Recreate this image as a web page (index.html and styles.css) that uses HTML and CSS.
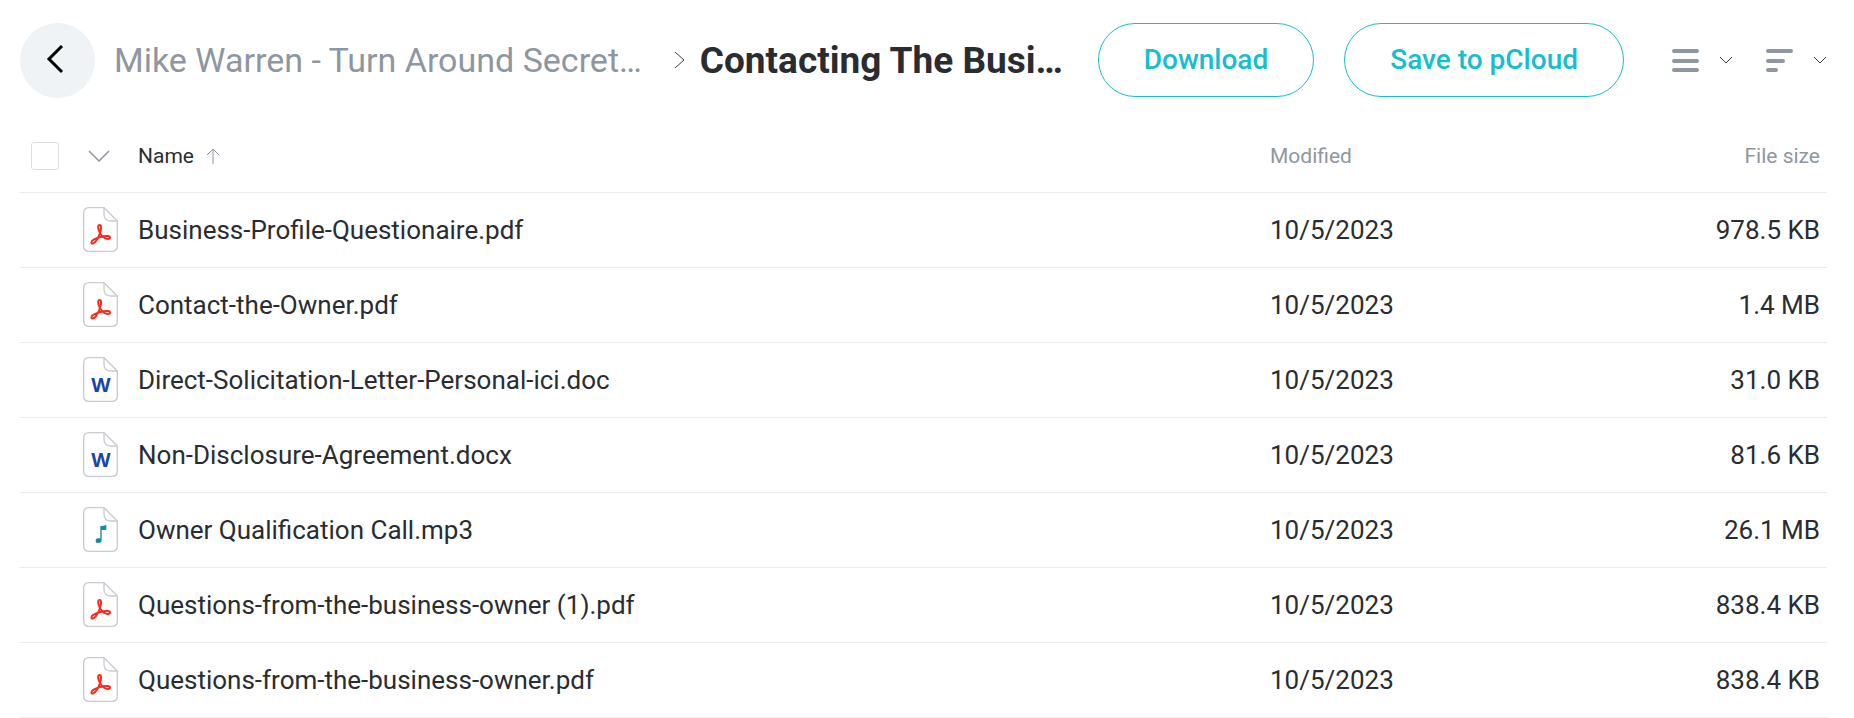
FILE: index.html
```
<!DOCTYPE html>
<html lang="en">
<head>
	<meta charset="utf-8">
	<title>pCloud</title>
	<link rel="stylesheet" href="styles.css">
</head>
<body>
<!-- shared file icons -->
<svg class="defs" width="0" height="0">
	<symbol id="page" viewBox="0 0 105 135">
		<path d="M18 2H63L103 42V117Q103 133 87 133H18Q2 133 2 117V18Q2 2 18 2Z" fill="#fff" stroke="#c8cbd0" stroke-width="4"/>
		<path d="M63 2V22Q63 42 83 42H103" fill="none" stroke="#c8cbd0" stroke-width="4"/>
	</symbol>
	<symbol id="pdf" viewBox="0 0 105 135">
		<use href="#page"/>
		<path d="M50 54C43 54 45 67 50 76C55 86 64 95 74 96C83 97 84 88 74 87C60 86 44 91 32 98C22 104 24 112 31 109C39 105 47 90 51 78C55 66 56 54 50 54Z" fill="none" stroke="#fb2b20" stroke-width="6" stroke-linejoin="round"/>
	</symbol>
	<symbol id="music" viewBox="0 0 105 135">
		<use href="#page"/>
		<path d="M52 57Q61 58 70 53V68Q63 70 56 69V99Q56 108 46 108Q38 108 38 101Q38 94 46 94H52Z" fill="#1b89a6"/>
	</symbol>
</svg>

<header id="top">
	<button class="back" type="button" aria-label="Back">
		<svg width="18" height="30" viewBox="0 0 18 30"><path d="M16 1L3 14L16 27" fill="none" stroke="#000" stroke-width="3"/></svg>
	</button>
	<nav class="crumbs">
		<a href="#">Mike Warren - Turn Around Secret…</a>
		<svg width="12" height="18" viewBox="0 0 12 18"><path d="M1 1L10 9L1 17" fill="none" stroke="#34383c" stroke-width="1"/></svg>
		<h1>Contacting The Busi…</h1>
	</nav>
	<div class="actions">
		<button class="btn" type="button">Download</button>
		<button class="btn" type="button">Save to pCloud</button>
	</div>
	<div class="views">
		<button type="button" aria-label="View">
			<svg width="27" height="24" viewBox="0 0 27 24"><path d="M2 3H25M2 13H25M2 22H25" stroke="#8d96a1" stroke-width="4" stroke-linecap="round"/></svg>
			<svg width="14" height="8" viewBox="0 0 14 8"><path d="M1 1L7 7L13 1" fill="none" stroke="#34383c"/></svg>
		</button>
		<button type="button" aria-label="Sort">
			<svg width="27" height="24" viewBox="0 0 27 24"><path d="M2 3H25M2 13H17M2 22H10" stroke="#8d96a1" stroke-width="4" stroke-linecap="round"/></svg>
			<svg width="14" height="8" viewBox="0 0 14 8"><path d="M1 1L7 7L13 1" fill="none" stroke="#34383c"/></svg>
		</button>
	</div>
</header>

<main>
	<table id="files">
		<thead>
			<tr>
				<th class="check"><input type="checkbox" aria-label="Select all"></th>
				<th class="icon">
					<button type="button" aria-label="Select options">
						<svg width="22" height="13" viewBox="0 0 22 13"><path d="M1 2L11 12L21 2" fill="none" stroke="#8d96a1" stroke-width="1.5"/></svg>
					</button>
				</th>
				<th class="name">
					<button type="button">Name
						<svg width="14" height="16" viewBox="0 0 14 16"><path d="M7 16V1M1 7L7 1L13 7" fill="none" stroke="#8d96a1"/></svg>
					</button>
				</th>
				<th class="date">Modified</th>
				<th class="size">File size</th>
			</tr>
		</thead>
		<tbody>
			<tr>
				<td></td>
				<td class="icon"><svg width="35" height="45"><use href="#pdf"/></svg></td>
				<td>Business-Profile-Questionaire.pdf</td>
				<td>10/5/2023</td>
				<td class="size">978.5 KB</td>
			</tr>
			<tr>
				<td></td>
				<td class="icon"><svg width="35" height="45"><use href="#pdf"/></svg></td>
				<td>Contact-the-Owner.pdf</td>
				<td>10/5/2023</td>
				<td class="size">1.4 MB</td>
			</tr>
			<tr>
				<td></td>
				<td class="icon"><svg width="35" height="45"><use href="#page"/><text class="letter" x="18" y="35">W</text></svg></td>
				<td>Direct-Solicitation-Letter-Personal-ici.doc</td>
				<td>10/5/2023</td>
				<td class="size">31.0 KB</td>
			</tr>
			<tr>
				<td></td>
				<td class="icon"><svg width="35" height="45"><use href="#page"/><text class="letter" x="18" y="35">W</text></svg></td>
				<td>Non-Disclosure-Agreement.docx</td>
				<td>10/5/2023</td>
				<td class="size">81.6 KB</td>
			</tr>
			<tr>
				<td></td>
				<td class="icon"><svg width="35" height="45"><use href="#music"/></svg></td>
				<td>Owner Qualification Call.mp3</td>
				<td>10/5/2023</td>
				<td class="size">26.1 MB</td>
			</tr>
			<tr>
				<td></td>
				<td class="icon"><svg width="35" height="45"><use href="#pdf"/></svg></td>
				<td>Questions-from-the-business-owner (1).pdf</td>
				<td>10/5/2023</td>
				<td class="size">838.4 KB</td>
			</tr>
			<tr>
				<td></td>
				<td class="icon"><svg width="35" height="45"><use href="#pdf"/></svg></td>
				<td>Questions-from-the-business-owner.pdf</td>
				<td>10/5/2023</td>
				<td class="size">838.4 KB</td>
			</tr>
		</tbody>
	</table>
</main>
</body>
</html>
```
FILE: styles.css
```
*{
	box-sizing: border-box;
}
body,h1{
	margin:0;
	padding:0;
}
body{
	padding:0 27px 0 20px;
	background: #fff;
	color:#292d31;
	font-family: Roboto, sans-serif;
	font-size: 26px;
}
button{
	padding:0;
	border:0;
	background: none;
	color:inherit;
	font:inherit;
	cursor: pointer;
}
svg{
	display: block;
	flex:none;
}
svg.defs{
	position: absolute;
}
.letter{
	font:bold 20px "Open Sans", sans-serif;
	fill:#1745a9;
	text-anchor: middle;
}

/* top bar */
#top{
	display: flex;
	align-items: center;
	height:120px;
}
.back{
	display: flex;
	align-items: center;
	justify-content: center;
	flex:none;
	width:75px;
	height:75px;
	padding-right:6px;
	border-radius: 50%;
	background: #eff3f5;
}
.crumbs{
	display: flex;
	align-items: center;
	flex:1;
	min-width: 0;
	margin-left:19px;
	white-space: nowrap;
}
.crumbs a{
	margin-right:32px;
	color:#8d96a1;
	font-size: 34px;
	text-decoration: none;
}
.crumbs h1{
	margin-left:14px;
	font-size: 37px;
	font-weight: 700;
}
.actions{
	display: flex;
	gap:30px;
}
.btn{
	height:74px;
	padding:0 45px 2px;
	border:1px solid #17bed0;
	border-radius: 37px;
	color:#17bed0;
	font-size: 28px;
	font-weight: 500;
	white-space: nowrap;
}
.views{
	display: flex;
	gap:33px;
	margin-left:48px;
}
.views button{
	display: flex;
	align-items: center;
	gap:20px;
}

/* file list */
#files{
	width:100%;
	border-collapse: collapse;
	table-layout: fixed;
}
#files th,#files td{
	padding:0;
	border-bottom:1px solid #ececec;
	text-align: left;
	font-weight: 400;
}
#files th{
	height:72px;
	color:#8d96a1;
	font-size: 21px;
}
#files td{
	height:75px;
}
#files .check{
	width:63px;
	padding-left:11px;
}
#files .icon{
	width:55px;
}
#files th.icon{
	padding-left:5px;
}
#files .date{
	width:320px;
}
#files .size{
	width:237px;
	padding-right:7px;
	text-align: right;
}
#files th button{
	display: flex;
	align-items: center;
	gap:12px;
}
#files .name{
	color:#292d31;
}
#files input{
	display: block;
	appearance: none;
	width:28px;
	height:28px;
	margin:0;
	border:1px solid #dcdee1;
	border-radius: 3px;
}
```
